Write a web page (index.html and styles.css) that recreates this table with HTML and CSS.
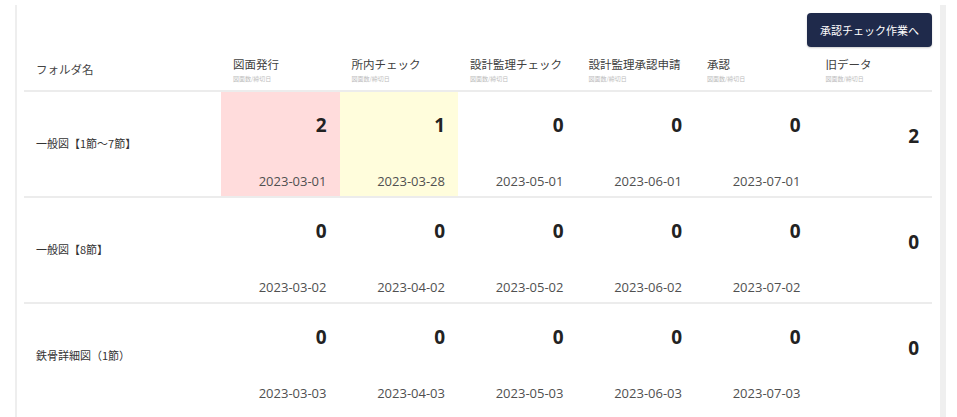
FILE: index.html
```html
<!DOCTYPE html>
<html lang="ja">
<head>
    <meta charset="UTF-8">
    <meta name="viewport" content="width=device-width, initial-scale=1.0">
    <title>フォルダ一覧</title>
    <link rel="stylesheet" href="styles.css">
</head>
<body>
    <div class="page">
        <div class="panel">
            <div class="toolbar">
                <button type="button" class="approve-btn">承認チェック作業へ</button>
            </div>
            <table class="folder-table">
                <colgroup>
                    <col class="col-name">
                    <col class="col-step">
                    <col class="col-step">
                    <col class="col-step">
                    <col class="col-step">
                    <col class="col-step">
                    <col class="col-step">
                </colgroup>
                <thead>
                    <tr>
                        <th class="name-head">フォルダ名</th>
                        <th><span class="step-title">図面発行</span><span class="step-sub">図面数/締切日</span></th>
                        <th><span class="step-title">所内チェック</span><span class="step-sub">図面数/締切日</span></th>
                        <th><span class="step-title">設計監理チェック</span><span class="step-sub">図面数/締切日</span></th>
                        <th><span class="step-title">設計監理承認申請</span><span class="step-sub">図面数/締切日</span></th>
                        <th><span class="step-title">承認</span><span class="step-sub">図面数/締切日</span></th>
                        <th><span class="step-title">旧データ</span><span class="step-sub">図面数/締切日</span></th>
                    </tr>
                </thead>
                <tbody>
                    <tr>
                        <td class="name">一般図【1節～7節】</td>
                        <td class="step overdue"><div class="count">2</div><div class="date">2023-03-01</div></td>
                        <td class="step warning"><div class="count">1</div><div class="date">2023-03-28</div></td>
                        <td class="step"><div class="count">0</div><div class="date">2023-05-01</div></td>
                        <td class="step"><div class="count">0</div><div class="date">2023-06-01</div></td>
                        <td class="step"><div class="count">0</div><div class="date">2023-07-01</div></td>
                        <td class="old"><div class="count">2</div></td>
                    </tr>
                    <tr>
                        <td class="name">一般図【8節】</td>
                        <td class="step"><div class="count">0</div><div class="date">2023-03-02</div></td>
                        <td class="step"><div class="count">0</div><div class="date">2023-04-02</div></td>
                        <td class="step"><div class="count">0</div><div class="date">2023-05-02</div></td>
                        <td class="step"><div class="count">0</div><div class="date">2023-06-02</div></td>
                        <td class="step"><div class="count">0</div><div class="date">2023-07-02</div></td>
                        <td class="old"><div class="count">0</div></td>
                    </tr>
                    <tr>
                        <td class="name">鉄骨詳細図（1節）</td>
                        <td class="step"><div class="count">0</div><div class="date">2023-03-03</div></td>
                        <td class="step"><div class="count">0</div><div class="date">2023-04-03</div></td>
                        <td class="step"><div class="count">0</div><div class="date">2023-05-03</div></td>
                        <td class="step"><div class="count">0</div><div class="date">2023-06-03</div></td>
                        <td class="step"><div class="count">0</div><div class="date">2023-07-03</div></td>
                        <td class="old"><div class="count">0</div></td>
                    </tr>
                </tbody>
            </table>
        </div>
        <div class="scroll-strip"></div>
    </div>
</body>
</html>
```

FILE: styles.css
```css
body {
    margin: 0;
    background-color: #fff;
    font-family: "Open Sans", "Noto Sans CJK JP", sans-serif;
    color: #333;
}
.page {
    display: flex;
    height: 417px;
    padding-top: 5px;
    box-sizing: border-box;
    overflow: hidden;
}
.panel {
    margin-left: 15px;
    border-left: 2px solid #eeeeee;
    padding-left: 7px;
    width: 908px;
}
.toolbar {
    display: flex;
    justify-content: flex-end;
    padding-top: 8px;
}
.approve-btn {
    width: 125px;
    height: 34px;
    background-color: #1f2a4b;
    color: #fff;
    border: none;
    border-radius: 4px;
    font-family: "Noto Sans CJK JP", sans-serif;
    font-size: 11px;
    box-shadow: 0 1px 2px rgba(0, 0, 0, 0.2);
    padding: 0;
}
.scroll-strip {
    margin-left: 8px;
    width: 6px;
    background-color: #efefef;
}
.folder-table {
    width: 908px;
    table-layout: fixed;
    border-collapse: collapse;
}
.col-name {
    width: 197px;
}
.folder-table th {
    text-align: left;
    font-weight: normal;
    vertical-align: bottom;
    padding: 9px 12px 6px;
    border-bottom: 2px solid #ececec;
}
.name-head {
    font-family: "Noto Sans CJK JP", sans-serif;
    font-size: 11.5px;
    line-height: 16px;
    color: #444;
    padding-bottom: 13px !important;
}
.step-title {
    display: block;
    font-family: "Noto Sans CJK JP", sans-serif;
    font-size: 11.5px;
    color: #404040;
    line-height: 16px;
    white-space: nowrap;
}
.step-sub {
    display: block;
    font-family: "Noto Sans CJK JP", sans-serif;
    font-size: 6px;
    color: #bdbdbd;
    line-height: 10px;
    margin-top: 2px;
    white-space: nowrap;
}
.folder-table td {
    padding: 0;
    border-bottom: 2px solid #ececec;
    vertical-align: top;
}
.folder-table tbody tr:last-child td {
    border-bottom: none;
}
.name {
    font-family: "Noto Sans CJK JP", sans-serif;
    font-size: 11px;
    line-height: 16px;
    color: #333;
    padding: 43px 12px 0 !important;
}
.step {
    text-align: right;
    padding-bottom: 6px !important;
}
.step .count,
.old .count {
    font-size: 19px;
    font-weight: bold;
    line-height: 26px;
    color: #222;
    padding-right: 13px;
}
.step .count {
    margin-top: 20px;
}
.step .date {
    margin-top: 34px;
    font-size: 13px;
    line-height: 18px;
    color: #505050;
    padding-right: 13px;
}
.old {
    text-align: right;
}
.old .count {
    margin-top: 31px;
}
.overdue {
    background-color: #ffdcdc;
}
.warning {
    background-color: #fffddc;
}
```
